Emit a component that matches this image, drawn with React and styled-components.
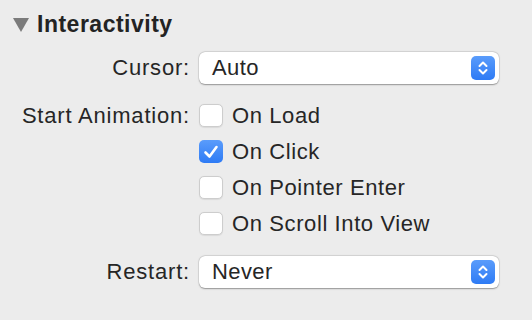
import React from 'react'
import styled, { createGlobalStyle } from 'styled-components'

const GlobalStyle = createGlobalStyle`
    html, body {
        margin: 0;
        padding: 0;
        background: #ececec;
    }
    body {
        font-family: "Liberation Sans", Arial, sans-serif;
        color: #262626;
    }
`

const Panel = styled.div`
    width: 532px;
    height: 320px;
    box-sizing: border-box;
    padding: 12px 0 0 13px;
`

const Header = styled.div`
    display: flex;
    align-items: center;
    gap: 8px;
    height: 24px;
`

const Triangle = styled.span`
    width: 0;
    height: 0;
    border-left: 8px solid transparent;
    border-right: 8px solid transparent;
    border-top: 14px solid #7b7b7b;
    margin-top: 2px;
`

const Title = styled.h2`
    margin: 0;
    font-size: 23px;
    font-weight: bold;
    letter-spacing: 0.5px;
    color: #232323;
`

const Form = styled.div`
    display: grid;
    grid-template-columns: 177px 300px;
    column-gap: 9px;
    margin-top: 16px;
`

const Label = styled.div`
    text-align: right;
    font-size: 22px;
    letter-spacing: 0.8px;
    line-height: ${p => (p.compact ? 23 : 32)}px;
    height: ${p => (p.compact ? 23 : 32)}px;
    margin-top: ${p => p.top || 0}px;
`

const Select = styled.div`
    height: 32px;
    background: #fff;
    border-radius: 6px;
    box-shadow: 0 0.5px 1.5px rgba(0, 0, 0, 0.35), 0 0 0 0.5px rgba(0, 0, 0, 0.08);
    display: flex;
    align-items: center;
    justify-content: space-between;
    padding: 0 4px 0 13px;
    box-sizing: border-box;
    font-size: 22px;
    letter-spacing: 0.4px;
    margin-top: ${p => p.top || 0}px;
`

const Stepper = styled.span`
    width: 24px;
    height: 24px;
    border-radius: 5px;
    background: linear-gradient(#5a9cfb, #2e7bf5);
    display: flex;
    align-items: center;
    justify-content: center;
`

const Checks = styled.div`
    display: flex;
    flex-direction: column;
    gap: 13px;
    margin-top: 20px;
`

const CheckRow = styled.div`
    display: flex;
    align-items: center;
    gap: 9px;
    height: 23px;
    font-size: 22px;
    letter-spacing: 0.6px;
`

const Box = styled.span`
    width: 24px;
    height: 23px;
    box-sizing: border-box;
    border-radius: 5px;
    background: ${p => (p.checked ? 'linear-gradient(#5a9cfb, #2e7bf5)' : '#fff')};
    border: ${p => (p.checked ? 'none' : '1px solid #cdcdcd')};
    box-shadow: ${p => (p.checked ? 'none' : '0 0.5px 1px rgba(0,0,0,0.08)')};
    display: flex;
    align-items: center;
    justify-content: center;
`

const Chevrons = () => (
    <svg width="12" height="18" viewBox="0 0 12 18">
        <path d="M2.5 7 L6 3.5 L9.5 7 M2.5 11 L6 14.5 L9.5 11" fill="none" stroke="#fff" strokeWidth="2" strokeLinecap="round" strokeLinejoin="round" />
    </svg>
)

const Check = () => (
    <svg width="16" height="14" viewBox="0 0 16 14">
        <path d="M2.5 7.5 L6.5 11.5 L13.5 2" fill="none" stroke="#fff" strokeWidth="2.6" strokeLinecap="round" strokeLinejoin="round" />
    </svg>
)

const options = [
    { label: 'On Load', checked: false },
    { label: 'On Click', checked: true },
    { label: 'On Pointer Enter', checked: false },
    { label: 'On Scroll Into View', checked: false },
]

const App = () => {
    return (
        <Panel>
            <GlobalStyle />
            <Header>
                <Triangle />
                <Title>Interactivity</Title>
            </Header>
            <Form>
                <Label>Cursor:</Label>
                <Select>
                    Auto
                    <Stepper><Chevrons /></Stepper>
                </Select>

                <Label top={20} compact>Start Animation:</Label>
                <Checks>
                    {options.map(o => (
                        <CheckRow key={o.label}>
                            <Box checked={o.checked}>{o.checked && <Check />}</Box>
                            {o.label}
                        </CheckRow>
                    ))}
                </Checks>

                <Label top={21}>Restart:</Label>
                <Select top={21}>
                    Never
                    <Stepper><Chevrons /></Stepper>
                </Select>
            </Form>
        </Panel>
    )
}

export default App
